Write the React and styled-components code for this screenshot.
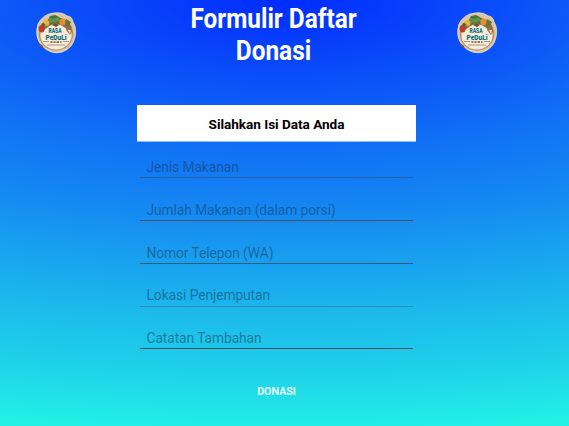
import React from "react";
import styled, { createGlobalStyle } from "styled-components";

const GlobalStyle = createGlobalStyle`
  * { box-sizing: border-box; }
  body { margin: 0; font-family: Roboto, sans-serif; }
`;

const Screen = styled.main`
  width: 569px;
  height: 426px;
  overflow: hidden;
  display: flex;
  flex-direction: column;
  background: radial-gradient(1250px 438px at 50% 0,
    #002bff 0%, #0843fa 12%, #0d5bf7 24%, #1070f5 34%, #1485f2 47%,
    #18a0ef 60%, #1cb9eb 72%, #1fd3e9 86%, #22efe6 98%);
`;

const Header = styled.header`
  height: 105px;
  padding: 0 71px 0 35px;
  display: flex;
  justify-content: space-between;
  align-items: flex-start;
`;

const Logo = styled.svg`
  display: block;
  width: 42px;
  height: 42px;
  margin-top: 12px;
`;

const Title = styled.h1`
  margin: 3px 0 0 0;
  width: 240px;
  color: #fff;
  font-size: 28px;
  font-weight: 700;
  line-height: 32px;
  text-align: center;
  white-space: nowrap;
  transform: translate(6.5px, 0.4px) scaleX(0.87);
`;

const Form = styled.form`
  width: 279px;
  margin-left: 137px;
  display: flex;
  flex-direction: column;
`;

const FormHeading = styled.h2`
  margin: 0 0 15px;
  height: 37px;
  padding-top: 1px;
  border-bottom: 1px solid #8cc0fb;
  background: #fff;
  color: #000;
  font-size: 13.6px;
  letter-spacing: -0.04px;
  font-weight: 700;
  line-height: 37px;
  text-align: center;
`;

const Field = styled.input`
  display: block;
  width: 273px;
  height: 21px;
  margin: 0 3px ${(p) => p.$gap}px;
  padding: 0 6.5px ${(p) => p.$lift}px;
  border: 0;
  border-bottom: 1px solid ${(p) => p.$line};
  background: transparent;
  outline: none;
  font-family: Roboto, sans-serif;
  font-size: 13.8px;
  letter-spacing: -0.08px;
  &::placeholder { color: rgba(24, 49, 80, 0.5); opacity: 1; }
`;

const Submit = styled.button`
  align-self: center;
  margin-top: 15px;
  padding: 0;
  border: 0;
  background: transparent;
  color: #f4ffff;
  font-family: Roboto, sans-serif;
  font-size: 10.7px;
  font-weight: 600;
  line-height: 14px;
`;

const fields = [
  { label: "Jenis Makanan", line: "#2a62a5", gap: 22, lift: 0 },
  { label: "Jumlah Makanan (dalam porsi)", line: "#534b5d", gap: 22, lift: 0 },
  { label: "Nomor Telepon (WA)", line: "#345b82", gap: 22, lift: 1 },
  { label: "Lokasi Penjemputan", line: "#348bb8", gap: 21, lift: 2 },
  { label: "Catatan Tambahan", line: "#45505f", gap: 21, lift: 0 },
];

function DonationLogo() {
  return (
    <Logo viewBox="0 0 42 42" role="img" aria-label="Rasa Peduli">
      <path d="M3 12Q8 2 19 1Q27 0 32 4Q37 4 38 10Q42 16 40 25Q38 36 27 40Q16 43 7 34Q-1 25 3 12Z" fill="#dcc6a4" stroke="#f1e5d0" strokeWidth=".8" />
      <ellipse cx="21" cy="22" rx="17.3" ry="16.5" fill="#ba8f68" />
      <ellipse cx="21" cy="23" rx="15.6" ry="14.6" fill="#f5ecda" />
      <path d="M4 19Q6 9 14 8Q23 4 31 8Q37 12 37 20Q32 18 29 15Q21 9 13 15Q9 19 4 19Z" fill="#8d6c43" />
      <path d="M12 10L15 4L20 3L24 5L27 8L25 13L20 10L15 13Z" fill="#477543" />
      <path d="M14 6L19 7L23 5L25 9L20 10L15 11Z" fill="#649447" />
      <circle cx="27.5" cy="10" r="3.2" fill="#ec8b31" />
      <path d="M31 7L36 10L34 14L30 13Z" fill="#5d793d" />
      <circle cx="11.5" cy="11" r="3" fill="#edb23e" />
      <ellipse cx="6.6" cy="16.8" rx="3" ry="3.7" fill="#ba3c2d" />
      <path d="M8 11L11 13L8 14L6 12Z" fill="#3d6c38" />
      <path d="M32 15L37 19L35 23L31 18Z" fill="#9f7150" />
      <path d="M33 18L36 18L35 22Z" fill="#f0d9b5" />
      <path d="M17 13Q20 10 24 13L21 15Z" fill="#754c32" />
      <path d="M8 29.5H14M28 29.5H34M12 33H30" fill="none" stroke="#9c8069" strokeWidth=".8" />
      <g fill="#126e7a" fontFamily="Roboto, sans-serif" fontWeight="900" textAnchor="middle">
        <text x="20" y="21" fontSize="6.8" textLength="13" lengthAdjust="spacingAndGlyphs">RASA</text>
        <text x="21" y="27.7" fontSize="6.8" textLength="21" lengthAdjust="spacingAndGlyphs">PeDuLi</text>
      </g>
      <path d="M15.5 30H17.5M18.5 30H20.5M21.5 30H24M25 30H26.5" stroke="#765641" strokeWidth="1.3" />
      <path d="M3 31L7 33L9 36L6 35Z" fill="#795839" />
    </Logo>
  );
}

export default function App() {
  return (
    <>
      <GlobalStyle />
      <Screen>
        <Header>
          <DonationLogo />
          <Title>Formulir Daftar<br />Donasi</Title>
          <DonationLogo />
        </Header>
        <Form onSubmit={(event) => event.preventDefault()}>
          <FormHeading>Silahkan Isi Data Anda</FormHeading>
          {fields.map((field) => (
            <Field
              key={field.label}
              placeholder={field.label}
              aria-label={field.label}
              $line={field.line}
              $gap={field.gap}
              $lift={field.lift}
            />
          ))}
          <Submit type="submit">DONASI</Submit>
        </Form>
      </Screen>
    </>
  );
}
